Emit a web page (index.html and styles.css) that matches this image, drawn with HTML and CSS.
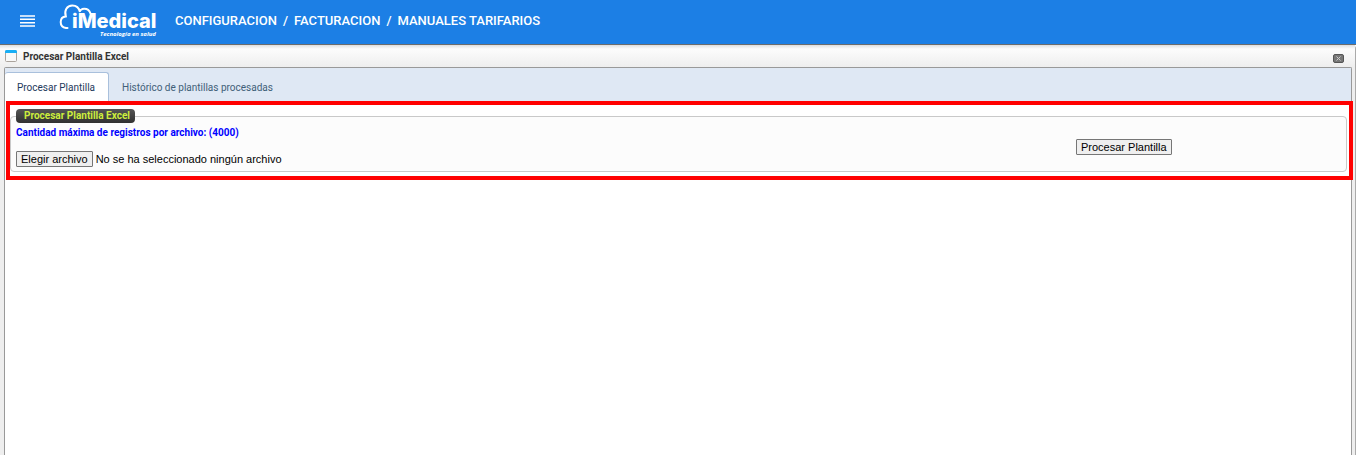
FILE: index.html
```html
<!DOCTYPE html>
<html lang="es">
<head>
    <meta charset="UTF-8">
    <meta name="viewport" content="width=device-width, initial-scale=1.0">
    <title>Procesar Plantilla Excel</title>
    <link rel="stylesheet" href="styles.css">
</head>
<body>
    <header class="topbar">
        <button type="button" class="menu-button" aria-label="Menú">
            <svg width="15" height="12" viewBox="0 0 15 12">
                <path d="M0 1h15M0 4.300h15M0 7.700h15M0 11h15" stroke="#fff" stroke-width="1.500"/>
            </svg>
        </button>
        <a href="#" class="logo" aria-label="iMedical">
            <svg width="98" height="40" viewBox="0 0 98 40">
                <path d="M8.500 27H7C3.800 26.500 1.700 24 1.700 21C1.700 17.800 3.800 15.600 6.800 15.400C4.900 9.500 8 4.500 13.300 4.500C17 4.500 20 6.800 21 11C20.500 7.500 29 5.500 31.500 12.500" fill="none" stroke="#fff" stroke-width="2" stroke-linecap="round"/>
                <text x="13" y="27" class="logo-name">iMedical</text>
                <text x="41" y="35" class="logo-tagline">Tecnología en salud</text>
            </svg>
        </a>
        <nav class="breadcrumb">
            <a href="#">CONFIGURACION</a>
            <span>/</span>
            <a href="#">FACTURACION</a>
            <span>/</span>
            <a href="#">MANUALES TARIFARIOS</a>
        </nav>
    </header>

    <!-- Ventana -->
    <main class="window">
        <div class="window-header">
            <svg class="window-icon" width="12" height="12" viewBox="0 0 12 12">
                <rect x="0.500" y="0.500" width="11" height="11" rx="1" fill="#f8f8f8" stroke="#aaa39c"/>
                <path d="M0 3V1.500Q0 0 1.500 0h9Q12 0 12 1.500V3z" fill="#18aef5"/>
            </svg>
            <h1>Procesar Plantilla Excel</h1>
            <button type="button" class="close-button" aria-label="Cerrar">
                <svg width="11" height="9" viewBox="0 0 11 9">
                    <rect x="0.500" y="0.500" width="10" height="8" rx="1.500" fill="#777" stroke="#555"/>
                    <path d="M3.500 2.500l4 4M7.500 2.500l-4 4" stroke="#ccc"/>
                </svg>
            </button>
        </div>

        <div class="panel">
            <div class="tabs" role="tablist">
                <button type="button" class="tab active" role="tab" aria-selected="true">Procesar Plantilla</button>
                <button type="button" class="tab" role="tab" aria-selected="false">Histórico de plantillas procesadas</button>
            </div>

            <form class="upload">
                <fieldset>
                    <legend>Procesar Plantilla Excel</legend>
                    <div class="upload-row">
                        <div>
                            <p class="limit">Cantidad máxima de registros por archivo: (4000)</p>
                            <div class="file-field">
                                <input type="file" id="archivo" class="file-input">
                                <label for="archivo" class="button">Elegir archivo</label>
                                <span>No se ha seleccionado ningún archivo</span>
                            </div>
                        </div>
                        <div class="actions">
                            <button type="button" class="button">Procesar Plantilla</button>
                        </div>
                    </div>
                </fieldset>
            </form>
        </div>
    </main>
</body>
</html>
```
FILE: styles.css
```css
* {
    box-sizing: border-box;
}

body {
    margin: 0;
    min-height: 100vh;
    display: flex;
    flex-direction: column;
    font-family: Roboto, Arial, sans-serif;
    font-size: 10px;
    background: #fff;
}

/* Barra superior */
.topbar {
    display: flex;
    align-items: center;
    height: 45px;
    padding: 0 20px 3px;
    background: #1c7fe5;
    border-bottom: 1px solid #6c6c6c;
}

.menu-button,
.close-button {
    display: flex;
    padding: 0;
    border: none;
    background: none;
    cursor: pointer;
}

.logo {
    display: flex;
    margin: 0 18px 0 24px;
}

.logo-name {
    font: 800 20px Inter, sans-serif;
    fill: #fff;
}

.logo-tagline {
    font: italic 700 6px "Open Sans", sans-serif;
    fill: #fff;
}

.breadcrumb {
    display: flex;
    gap: 6px;
    font-size: 13px;
    font-weight: 500;
    color: #fff;
}

.breadcrumb a {
    color: #fff;
    text-decoration: none;
}

/* Ventana */
.window {
    flex: 1;
    display: flex;
    flex-direction: column;
    padding: 0 3px 0 4px;
    background: #eee;
    border-right: 1px solid #aaa;
    border-radius: 4px 4px 0 0;
}

.window-header {
    display: flex;
    align-items: center;
    gap: 6px;
    height: 22px;
    margin: 0 -3px 0 -4px;
    padding: 0 11px 0 5px;
    background: linear-gradient(#dedede, #fcfcfc 4px, #eee);
}

.window-header h1 {
    margin: 0;
    font-size: 10px;
    font-weight: 700;
    color: #333;
}

.close-button {
    margin: 4px 0 0 auto;
}

.panel {
    flex: 1;
    background: #fff;
    border: 1px solid #999;
    border-bottom: none;
    border-radius: 2px 2px 0 0;
}

/* Pestañas */
.tabs {
    display: flex;
    height: 33px;
    padding-top: 4px;
    background: #dfe8f4;
}

.tab {
    padding: 1px 13px 0;
    border: none;
    background: none;
    font-family: inherit;
    font-size: 10px;
    color: #416078;
    cursor: pointer;
}

.tab.active {
    padding: 0 13px 0 12px;
    border: 1px solid #a9c0dc;
    border-width: 1px 1px 0 0;
    border-radius: 3px 3px 0 0;
    background: #fff;
    color: #1e395b;
}

/* Carga de la plantilla */
.upload {
    margin: 0 -2px 0 1px;
    padding: 4px 2px 4px 0;
    border: 4px solid #f00;
}

fieldset {
    margin: 0;
    padding: 4px 5px;
    border: 1px solid #c9c9c9;
    border-radius: 4px;
    background: #fcfcfc;
}

legend {
    padding: 0 5px 0 8px;
    border-radius: 4px;
    background: linear-gradient(#555, #303030);
    font-size: 10px;
    font-weight: 700;
    line-height: 14px;
    color: #cdee3d;
}

.upload-row {
    display: grid;
    grid-template-columns: 4fr 1fr;
    align-items: center;
}

.limit {
    margin: 0 0 12px;
    font-size: 10px;
    font-weight: 700;
    line-height: 12px;
    color: #00f;
}

.file-field {
    position: relative;
    display: flex;
    align-items: center;
    gap: 3px;
    font: 11px "Liberation Sans", Arial, sans-serif;
}

.file-input {
    position: absolute;
    width: 78px;
    height: 16px;
    opacity: 0;
}

.button {
    height: 16px;
    padding: 0 4px;
    border: 1px solid #767676;
    border-radius: 1px;
    background: #efefef;
    font: 11px/14px "Liberation Sans", Arial, sans-serif;
    color: #000;
}

.actions {
    display: flex;
}
```
